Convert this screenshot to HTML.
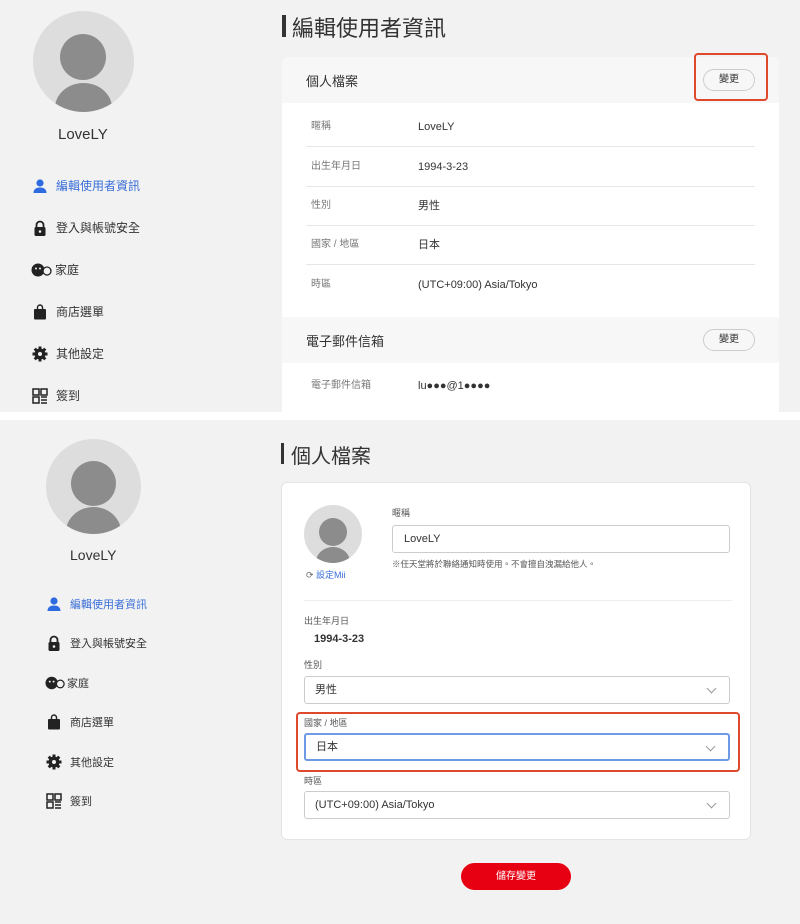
<!DOCTYPE html>
<html><head><meta charset="utf-8"><style>
*{box-sizing:border-box;margin:0;padding:0}
body{width:800px;height:924px;background:#fff;font-family:"Liberation Sans","Noto Sans CJK TC",sans-serif;color:#333;position:relative;overflow:hidden}
.p{position:absolute;left:0;width:800px;background:#f2f2f2;overflow:hidden}
.a{position:absolute}
.nav{position:absolute;font-size:12px;color:#333;display:flex;align-items:center;gap:8px}
.ic{width:16px;height:16px;display:inline-block}
.row{position:absolute;left:24px;right:24px;height:40px;border-bottom:1px solid #e6e6e6;font-size:11px;line-height:40px}
.row .l{position:absolute;left:5px;top:0;color:#777;font-size:10px}
.row .v{position:absolute;left:112px;top:0;color:#333}
.btn{position:absolute;width:52px;height:22px;border:1px solid #ccc;border-radius:11px;background:#f7f7f7;font-size:10px;text-align:center;line-height:20px}
.sel{position:absolute;left:22px;width:426px;height:28px;border:1px solid #ccc;border-radius:3px;background:#fff;font-size:11px;line-height:26px;padding-left:10px}
.sel:after{content:"";position:absolute;right:14px;top:8px;width:6px;height:6px;border-right:1.5px solid #999;border-bottom:1.5px solid #999;transform:rotate(45deg)}
.lb{position:absolute;left:22px;font-size:9px;color:#555}
</style></head><body>
<div class="p" style="top:0;height:412px">
 <div class="a" style="left:33px;top:11px;width:101px;height:101px;border-radius:50%;background:#ddd;overflow:hidden">
  <div class="a" style="left:27px;top:23px;width:46px;height:46px;border-radius:50%;background:#8c8c8c"></div>
  <div class="a" style="left:22px;top:72px;width:57px;height:50px;border-radius:50%;background:#8c8c8c"></div>
 </div>
 <div class="a" style="left:58px;top:126px;font-size:15px">LoveLY</div>
 <div class="nav" style="left:32px;top:177px;color:#3a6fd8"><svg class="ic" viewBox="0 0 16 16"><circle cx="8" cy="5" r="3.6" fill="#2f6be0"/><path d="M1.5 15c0-4 3-5.5 6.5-5.5s6.5 1.5 6.5 5.5z" fill="#2f6be0"/></svg>編輯使用者資訊</div>
 <div class="nav" style="left:32px;top:219px"><svg class="ic" viewBox="0 0 16 16"><path d="M4.5 7V5a3.5 3.5 0 017 0v2" stroke="#222" stroke-width="1.8" fill="none"/><rect x="2.5" y="7" width="11" height="9" rx="1.5" fill="#222"/><circle cx="8" cy="11.5" r="1.3" fill="#f2f2f2"/></svg>登入與帳號安全</div>
 <div class="nav" style="left:31px;top:261px;gap:2px"><svg style="width:22px;height:16px" viewBox="0 0 22 16"><circle cx="7" cy="8" r="6.5" fill="#222"/><circle cx="5" cy="6.5" r="1" fill="#f2f2f2"/><circle cx="9" cy="6.5" r="1" fill="#f2f2f2"/><circle cx="16" cy="9" r="4" fill="#f2f2f2" stroke="#222" stroke-width="1.3"/></svg>家庭</div>
 <div class="nav" style="left:32px;top:303px"><svg class="ic" viewBox="0 0 16 16"><path d="M5.5 5V3.5a2.5 2.5 0 015 0V5" stroke="#222" stroke-width="1.4" fill="none"/><rect x="2" y="5" width="12" height="10.5" rx="1" fill="#222"/></svg>商店選單</div>
 <div class="nav" style="left:32px;top:345px"><svg class="ic" viewBox="0 0 16 16"><circle cx="8" cy="8" r="5.5" fill="#222"/><g stroke="#222" stroke-width="3"><path d="M8 0.5v15M0.5 8h15M2.7 2.7l10.6 10.6M13.3 2.7L2.7 13.3"/></g><circle cx="8" cy="8" r="2" fill="#f2f2f2"/></svg>其他設定</div>
 <div class="nav" style="left:32px;top:387px"><svg class="ic" viewBox="0 0 16 16" fill="none" stroke="#222" stroke-width="1.5"><rect x="1" y="1" width="6" height="6"/><rect x="9" y="1" width="6" height="6"/><rect x="1" y="9" width="6" height="6"/><path d="M9 9h6M9 12h6M9 15h6"/></svg>簽到</div>
 <div class="a" style="left:282px;top:15px;width:4px;height:22px;background:#333"></div>
 <div class="a" style="left:292px;top:11px;font-size:22px;color:#333">編輯使用者資訊</div>
 <div class="a" style="left:282px;top:57px;width:497px;height:370px;background:#fff;border-radius:6px">
  <div class="a" style="left:0;top:0;width:497px;height:46px;background:#f7f7f7;border-radius:6px 6px 0 0"></div>
  <div class="a" style="left:24px;top:14px;font-size:13px">個人檔案</div>
  <div class="btn" style="left:421px;top:12px">變更</div>
  <div class="a" style="left:412px;top:-4px;width:74px;height:48px;border:2px solid #e0482c;border-radius:4px"></div>
  <div class="row" style="top:50px"><span class="l">暱稱</span><span class="v">LoveLY</span></div>
  <div class="row" style="top:90px"><span class="l">出生年月日</span><span class="v">1994-3-23</span></div>
  <div class="row" style="top:129px"><span class="l">性別</span><span class="v">男性</span></div>
  <div class="row" style="top:168px"><span class="l">國家 / 地區</span><span class="v">日本</span></div>
  <div class="row" style="top:208px;border:0"><span class="l">時區</span><span class="v">(UTC+09:00) Asia/Tokyo</span></div>
  <div class="a" style="left:0;top:260px;width:497px;height:46px;background:#f7f7f7"></div>
  <div class="a" style="left:24px;top:274px;font-size:13px">電子郵件信箱</div>
  <div class="btn" style="left:421px;top:272px">變更</div>
  <div class="row" style="top:309px;border:0"><span class="l">電子郵件信箱</span><span class="v">lu●●●@1●●●●</span></div>
 </div>
</div>
<div class="p" style="top:420px;height:504px">
 <div class="a" style="left:46px;top:19px;width:95px;height:95px;border-radius:50%;background:#ddd;overflow:hidden">
  <div class="a" style="left:25px;top:22px;width:45px;height:45px;border-radius:50%;background:#8c8c8c"></div>
  <div class="a" style="left:20px;top:68px;width:55px;height:50px;border-radius:50%;background:#8c8c8c"></div>
 </div>
 <div class="a" style="left:70px;top:127px;font-size:14px">LoveLY</div>
 <div class="nav" style="left:46px;top:176px;font-size:11px;color:#3a6fd8"><svg class="ic" viewBox="0 0 16 16"><circle cx="8" cy="5" r="3.6" fill="#2f6be0"/><path d="M1.5 15c0-4 3-5.5 6.5-5.5s6.5 1.5 6.5 5.5z" fill="#2f6be0"/></svg>編輯使用者資訊</div>
 <div class="nav" style="left:46px;top:215px;font-size:11px"><svg class="ic" viewBox="0 0 16 16"><path d="M4.5 7V5a3.5 3.5 0 017 0v2" stroke="#222" stroke-width="1.8" fill="none"/><rect x="2.5" y="7" width="11" height="9" rx="1.5" fill="#222"/><circle cx="8" cy="11.5" r="1.3" fill="#f2f2f2"/></svg>登入與帳號安全</div>
 <div class="nav" style="left:45px;top:255px;font-size:11px;gap:1px"><svg style="width:21px;height:16px" viewBox="0 0 22 16"><circle cx="7" cy="8" r="6.5" fill="#222"/><circle cx="5" cy="6.5" r="1" fill="#f2f2f2"/><circle cx="9" cy="6.5" r="1" fill="#f2f2f2"/><circle cx="16" cy="9" r="4" fill="#f2f2f2" stroke="#222" stroke-width="1.3"/></svg>家庭</div>
 <div class="nav" style="left:46px;top:294px;font-size:11px"><svg class="ic" viewBox="0 0 16 16"><path d="M5.5 5V3.5a2.5 2.5 0 015 0V5" stroke="#222" stroke-width="1.4" fill="none"/><rect x="2" y="5" width="12" height="10.5" rx="1" fill="#222"/></svg>商店選單</div>
 <div class="nav" style="left:46px;top:334px;font-size:11px"><svg class="ic" viewBox="0 0 16 16"><circle cx="8" cy="8" r="5.5" fill="#222"/><g stroke="#222" stroke-width="3"><path d="M8 0.5v15M0.5 8h15M2.7 2.7l10.6 10.6M13.3 2.7L2.7 13.3"/></g><circle cx="8" cy="8" r="2" fill="#f2f2f2"/></svg>其他設定</div>
 <div class="nav" style="left:46px;top:373px;font-size:11px"><svg class="ic" viewBox="0 0 16 16" fill="none" stroke="#222" stroke-width="1.5"><rect x="1" y="1" width="6" height="6"/><rect x="9" y="1" width="6" height="6"/><rect x="1" y="9" width="6" height="6"/><path d="M9 9h6M9 12h6M9 15h6"/></svg>簽到</div>
 <div class="a" style="left:281px;top:23px;width:3px;height:21px;background:#333"></div>
 <div class="a" style="left:291px;top:20px;font-size:20px;color:#333">個人檔案</div>
 <div class="a" style="left:281px;top:62px;width:470px;height:358px;background:#fff;border:1px solid #e4e4e4;border-radius:6px">
  <div class="a" style="left:22px;top:22px;width:58px;height:58px;border-radius:50%;background:#ddd;overflow:hidden">
   <div class="a" style="left:15px;top:13px;width:28px;height:28px;border-radius:50%;background:#8c8c8c"></div>
   <div class="a" style="left:12px;top:42px;width:34px;height:30px;border-radius:50%;background:#8c8c8c"></div>
  </div>
  <div class="a" style="left:24px;top:85px;font-size:9px;color:#3a6fd8"><span style="color:#666">⟳</span> 設定Mii</div>
  <div class="a" style="left:110px;top:23px;font-size:9px;color:#555">暱稱</div>
  <div class="a" style="left:110px;top:42px;width:338px;height:28px;border:1px solid #ccc;border-radius:3px;font-size:11px;line-height:26px;padding-left:11px">LoveLY</div>
  <div class="a" style="left:110px;top:75px;font-size:8.5px;color:#555">※任天堂將於聯絡通知時使用。不會擅自洩漏給他人。</div>
  <div class="a" style="left:22px;top:117px;width:428px;height:1px;background:#eee"></div>
  <div class="lb" style="top:131px">出生年月日</div>
  <div class="a" style="left:32px;top:150px;font-size:11px;font-weight:bold">1994-3-23</div>
  <div class="lb" style="top:175px">性別</div>
  <div class="sel" style="top:193px">男性</div>
  <div class="lb" style="top:233px">國家 / 地區</div>
  <div class="sel" style="top:250px;border:2px solid #6d9be6;line-height:24px">日本</div>
  <div class="a" style="left:14px;top:229px;width:444px;height:60px;border:2px solid #e0482c;border-radius:4px"></div>
  <div class="lb" style="top:291px">時區</div>
  <div class="sel" style="top:308px">(UTC+09:00) Asia/Tokyo</div>
 </div>
 <div class="a" style="left:461px;top:443px;width:110px;height:27px;background:#e60012;border-radius:14px;color:#fff;font-size:10px;text-align:center;line-height:27px">儲存變更</div>
</div>
</body></html>
